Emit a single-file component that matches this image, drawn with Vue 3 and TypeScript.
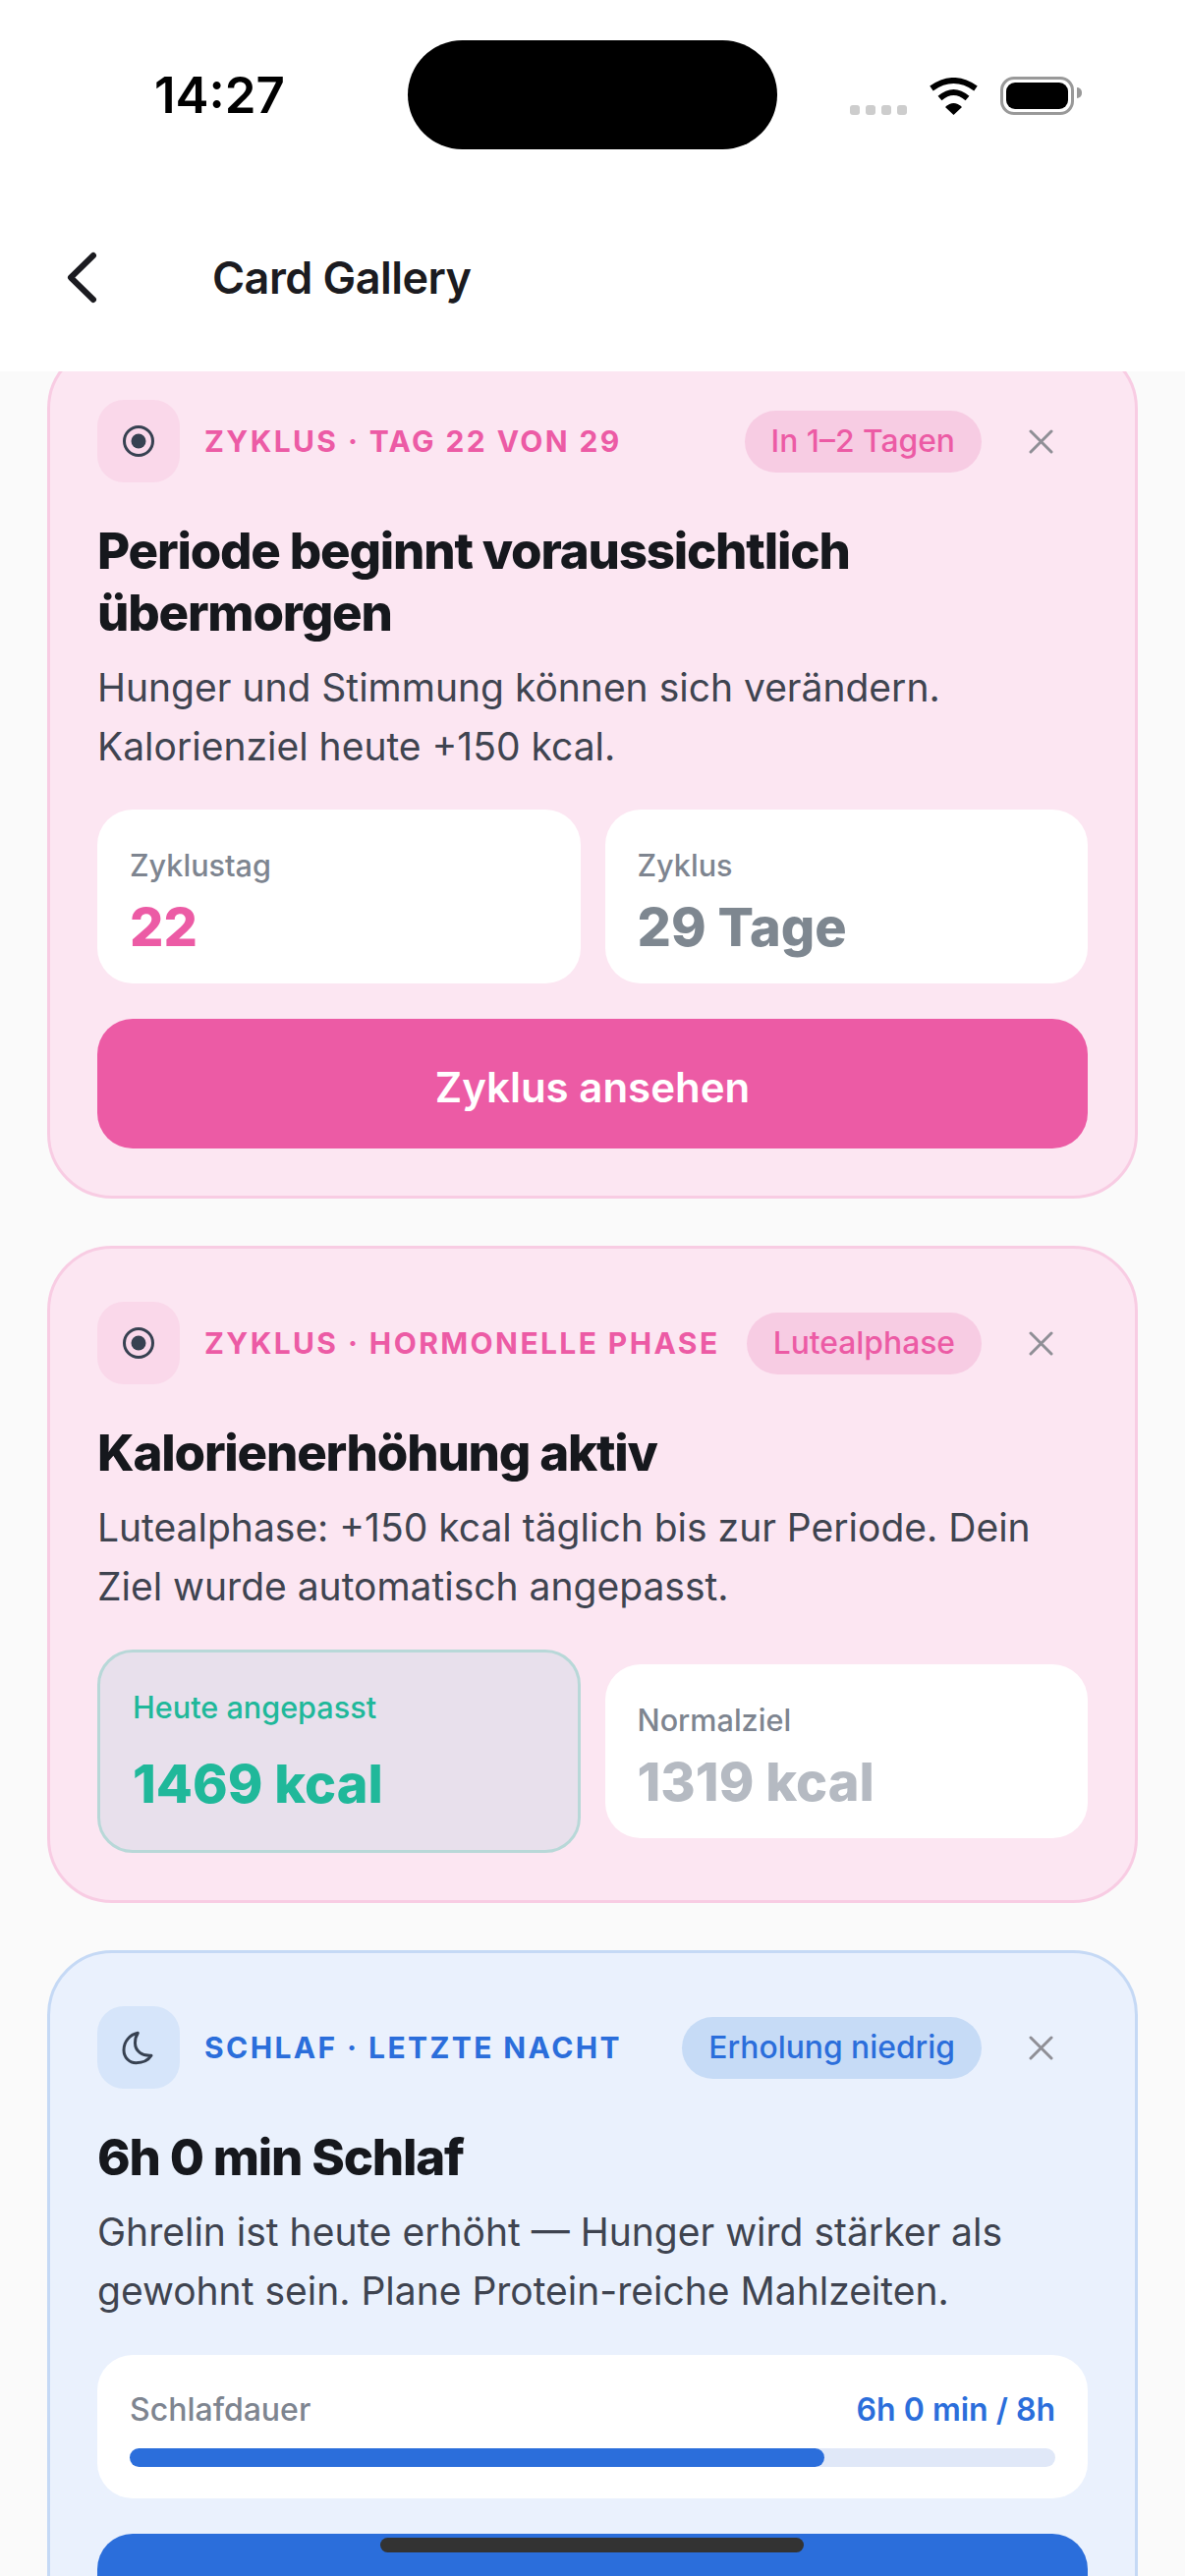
<script setup lang="ts">
interface Stat {
  label: string
  value: string
  tone: 'accent' | 'muted' | 'faint' | 'success'
  highlight?: boolean
}

interface Card {
  theme: 'pink' | 'blue'
  icon: 'cycle' | 'moon'
  eyebrow: string
  pill: string
  title: string[]
  text: string[]
  stats?: Stat[]
  progress?: { label: string; value: string; percent: number }
  cta?: string
  hasButton: boolean
}

const cards: Card[] = [
  {
    theme: 'pink',
    icon: 'cycle',
    eyebrow: 'ZYKLUS · TAG 22 VON 29',
    pill: 'In 1–2 Tagen',
    title: ['Periode beginnt voraussichtlich', 'übermorgen'],
    text: ['Hunger und Stimmung können sich verändern.', 'Kalorienziel heute +150 kcal.'],
    stats: [
      { label: 'Zyklustag', value: '22', tone: 'accent' },
      { label: 'Zyklus', value: '29 Tage', tone: 'muted' },
    ],
    cta: 'Zyklus ansehen',
    hasButton: true,
  },
  {
    theme: 'pink',
    icon: 'cycle',
    eyebrow: 'ZYKLUS · HORMONELLE PHASE',
    pill: 'Lutealphase',
    title: ['Kalorienerhöhung aktiv'],
    text: ['Lutealphase: +150 kcal täglich bis zur Periode. Dein', 'Ziel wurde automatisch angepasst.'],
    stats: [
      { label: 'Heute angepasst', value: '1469 kcal', tone: 'success', highlight: true },
      { label: 'Normalziel', value: '1319 kcal', tone: 'faint' },
    ],
    hasButton: false,
  },
  {
    theme: 'blue',
    icon: 'moon',
    eyebrow: 'SCHLAF · LETZTE NACHT',
    pill: 'Erholung niedrig',
    title: ['6h 0 min Schlaf'],
    text: ['Ghrelin ist heute erhöht — Hunger wird stärker als', 'gewohnt sein. Plane Protein-reiche Mahlzeiten.'],
    progress: { label: 'Schlafdauer', value: '6h 0 min / 8h', percent: 75 },
    hasButton: true,
  },
]
</script>

<template>
  <div class="screen">
    <header class="top">
      <div class="status">
        <span class="status__time">14:27</span>
        <div class="status__icons">
          <div class="signal">
            <i v-for="n in 4" :key="n" class="signal__dot"></i>
          </div>
          <svg class="wifi" width="51" height="38" viewBox="0 0 51 38">
            <path d="M25.5 38 L17 30 Q25.5 22 34 30 Z" fill="#000" />
            <path d="M11.5 21 Q25.5 9 39.5 21" fill="none" stroke="#000" stroke-width="6" />
            <path d="M3 11 Q25.5 -5 48 11" fill="none" stroke="#000" stroke-width="6" />
          </svg>
          <div class="battery">
            <div class="battery__level"></div>
          </div>
        </div>
      </div>
      <div class="island"></div>
      <nav class="nav">
        <svg class="nav__back" width="36" height="57" viewBox="0 0 36 57">
          <path d="M31 6 L8 28.5 L31 51" fill="none" stroke="#1b1b20" stroke-width="6" stroke-linecap="round" stroke-linejoin="round" />
        </svg>
        <h1 class="nav__title">Card Gallery</h1>
      </nav>
    </header>

    <main class="feed">
      <section v-for="card in cards" :key="card.eyebrow" class="card" :class="`card--${card.theme}`">
        <div class="card__head">
          <div class="card__icon">
            <svg v-if="card.icon === 'cycle'" width="36" height="36" viewBox="0 0 36 36">
              <circle cx="18" cy="18" r="14.5" fill="none" stroke="#374151" stroke-width="3" />
              <circle cx="18" cy="18" r="7.5" fill="#374151" />
            </svg>
            <svg v-else width="40" height="40" viewBox="0 0 40 40" fill="none" stroke="#374151" stroke-width="3" stroke-linejoin="round">
              <path d="M19.3 5.3 C11 7 5 14 5 22.7 C5 30 10.5 35.7 17.5 35.7 C24 35.7 30 33 33 28.3 C24 29 16.5 24 16.5 15.5 C16.5 11.5 17.5 8 19.3 5.3 Z" />
            </svg>
          </div>
          <span class="card__eyebrow">{{ card.eyebrow }}</span>
          <span class="card__pill">{{ card.pill }}</span>
          <button class="card__close" type="button" aria-label="Schließen">
            <svg width="25" height="25" viewBox="0 0 25 25">
              <path d="M2 2 L23 23 M23 2 L2 23" fill="none" stroke="#8f8f96" stroke-width="3" stroke-linecap="round" />
            </svg>
          </button>
        </div>

        <h2 class="card__title">
          <span v-for="line in card.title" :key="line">{{ line }}</span>
        </h2>
        <p class="card__text">
          <span v-for="line in card.text" :key="line">{{ line }}</span>
        </p>

        <div v-if="card.stats" class="stats">
          <div v-for="stat in card.stats" :key="stat.label" class="stat" :class="{ 'stat--highlight': stat.highlight }">
            <span class="stat__label">{{ stat.label }}</span>
            <span class="stat__value" :class="`stat__value--${stat.tone}`">{{ stat.value }}</span>
          </div>
        </div>

        <div v-if="card.progress" class="progress">
          <div class="progress__row">
            <span class="progress__label">{{ card.progress.label }}</span>
            <span class="progress__value">{{ card.progress.value }}</span>
          </div>
          <div class="progress__track">
            <div class="progress__fill" :style="{ width: `${card.progress.percent}%` }"></div>
          </div>
        </div>

        <button v-if="card.hasButton" class="card__cta" type="button">{{ card.cta }}</button>
      </section>
    </main>

    <div class="home-indicator"></div>
  </div>
</template>

<style scoped>
.screen {
  position: relative;
  display: flex;
  flex-direction: column;
  width: 1206px;
  height: 2622px;
  overflow: hidden;
  background: #fafafa;
  font-family: Inter, "Liberation Sans", sans-serif;
}

.top {
  position: relative;
  z-index: 2;
  flex: none;
  height: 378px;
  background: #fff;
}

.status {
  display: flex;
  align-items: flex-start;
  justify-content: space-between;
  height: 180px;
  padding: 66px 113px 0 157px;
  box-sizing: border-box;
}

.status__time {
  font-size: 51px;
  line-height: 62px;
  font-weight: 600;
  color: #000;
}

.status__icons {
  display: flex;
  align-items: flex-end;
  gap: 22px;
  margin-top: 12px;
}

.signal {
  display: flex;
  gap: 6px;
}

.signal__dot {
  width: 10px;
  height: 10px;
  border-radius: 3px;
  background: #cdcdcd;
}

.wifi {
  display: block;
}

.battery {
  position: relative;
  box-sizing: border-box;
  width: 75px;
  height: 39px;
  padding: 3px;
  border: 3px solid #999;
  border-radius: 14px;
}

.battery::after {
  content: "";
  position: absolute;
  top: 8px;
  right: -11px;
  width: 5px;
  height: 11px;
  border-radius: 0 6px 6px 0;
  background: #999;
}

.battery__level {
  height: 100%;
  border-radius: 9px;
  background: #000;
}

.island {
  position: absolute;
  top: 41px;
  left: 415px;
  width: 376px;
  height: 111px;
  border-radius: 56px;
  background: #000;
}

.nav {
  display: flex;
  align-items: center;
  height: 204px;
  padding-left: 64px;
}

.nav__back {
  flex: none;
}

.nav__title {
  margin: 2px 0 0 116px;
  font-size: 45px;
  line-height: 58px;
  font-weight: 600;
  color: #1b1b20;
  letter-spacing: -0.55px;
}

.feed {
  display: flex;
  flex-direction: column;
  gap: 48px;
  margin-top: -28px;
  padding: 0 48px;
}

.card {
  flex: none;
  padding: 54px 48px 48px;
  border: 3px solid;
  border-radius: 66px;
}

.card--pink {
  --accent: #ec5ba5;
  --pill: #f7cce3;
  --icon: #fad8ea;
  background: #fce6f2;
  border-color: #f8cce3;
}

.card--blue {
  --accent: #2b6edb;
  --pill: #c6dbf6;
  --icon: #d6e5fa;
  background: #eaf1fd;
  border-color: #c5d9f5;
}

.card__head {
  display: flex;
  align-items: center;
  height: 84px;
}

.card__icon {
  flex: none;
  display: flex;
  align-items: center;
  justify-content: center;
  width: 84px;
  height: 84px;
  margin-right: 25px;
  border-radius: 27px;
  background: var(--icon);
}

.card__eyebrow {
  flex: 1;
  min-width: 0;
  white-space: nowrap;
  font-size: 30px;
  font-weight: 700;
  letter-spacing: 2.4px;
  color: var(--accent);
}

.card__pill {
  flex: none;
  padding: 0 27px;
  height: 63px;
  line-height: 62px;
  border-radius: 32px;
  font-size: 31.8px;
  font-weight: 500;
  color: var(--accent);
  background: var(--pill);
}

.card__close {
  flex: none;
  display: flex;
  align-items: center;
  justify-content: center;
  width: 96px;
  height: 84px;
  margin-left: 12px;
  padding: 0;
  border: 0;
  background: none;
}

.card__title {
  margin: 38px 0 0;
  font-size: 51px;
  line-height: 63px;
  font-weight: 800;
  letter-spacing: -1.2px;
  color: #16181d;
}

.card__title span,
.card__text span {
  display: block;
  white-space: nowrap;
}

.card__text {
  margin: 15px 0 0;
  font-size: 39px;
  line-height: 60px;
  font-weight: 400;
  color: #3f4450;
}

.stats {
  display: grid;
  grid-template-columns: 1fr 1fr;
  align-items: center;
  gap: 25px;
  margin-top: 34px;
}

.stat {
  display: flex;
  flex-direction: column;
  box-sizing: border-box;
  height: 177px;
  padding: 39px 33px 0;
  border-radius: 36px;
  background: #fff;
}

.stat--highlight {
  height: 207px;
  padding-top: 38px;
  border: 3px solid #b8d8d8;
  background: #e8e0ec;
}

.stat__label {
  font-size: 30.6px;
  line-height: 36px;
  font-weight: 500;
  color: #7e8590;
}

.stat--highlight .stat__label {
  color: #20b89a;
}

.stat__value {
  margin-top: 12px;
  font-size: 54px;
  line-height: 66px;
  font-weight: 800;
}

.stat--highlight .stat__value {
  margin-top: 27px;
}

.stat__value--accent {
  color: var(--accent);
}

.stat__value--muted {
  color: #7e8790;
}

.stat__value--faint {
  color: #b5bac2;
}

.stat__value--success {
  color: #20b89a;
}

.card__cta {
  display: block;
  width: 100%;
  height: 132px;
  margin-top: 36px;
  padding: 6px 0 0;
  border: 0;
  border-radius: 36px;
  background: var(--accent);
  color: #fff;
  font-family: inherit;
  font-size: 42px;
  font-weight: 600;
}

.progress {
  box-sizing: border-box;
  height: 146px;
  margin-top: 35px;
  padding: 36px 33px 0;
  border-radius: 36px;
  background: #fff;
}

.progress__row {
  display: flex;
  justify-content: space-between;
  align-items: center;
  height: 38px;
  font-size: 32px;
  font-weight: 500;
}

.progress__label {
  color: #7e8590;
}

.progress__value {
  font-weight: 600;
  color: var(--accent);
}

.progress__track {
  height: 19px;
  margin-top: 21px;
  border-radius: 10px;
  background: #e0e8f8;
}

.progress__fill {
  height: 100%;
  border-radius: 10px;
  background: var(--accent);
}

.home-indicator {
  position: absolute;
  z-index: 3;
  left: 387px;
  top: 2583px;
  width: 431px;
  height: 15px;
  border-radius: 8px;
  background: #333;
}
</style>
